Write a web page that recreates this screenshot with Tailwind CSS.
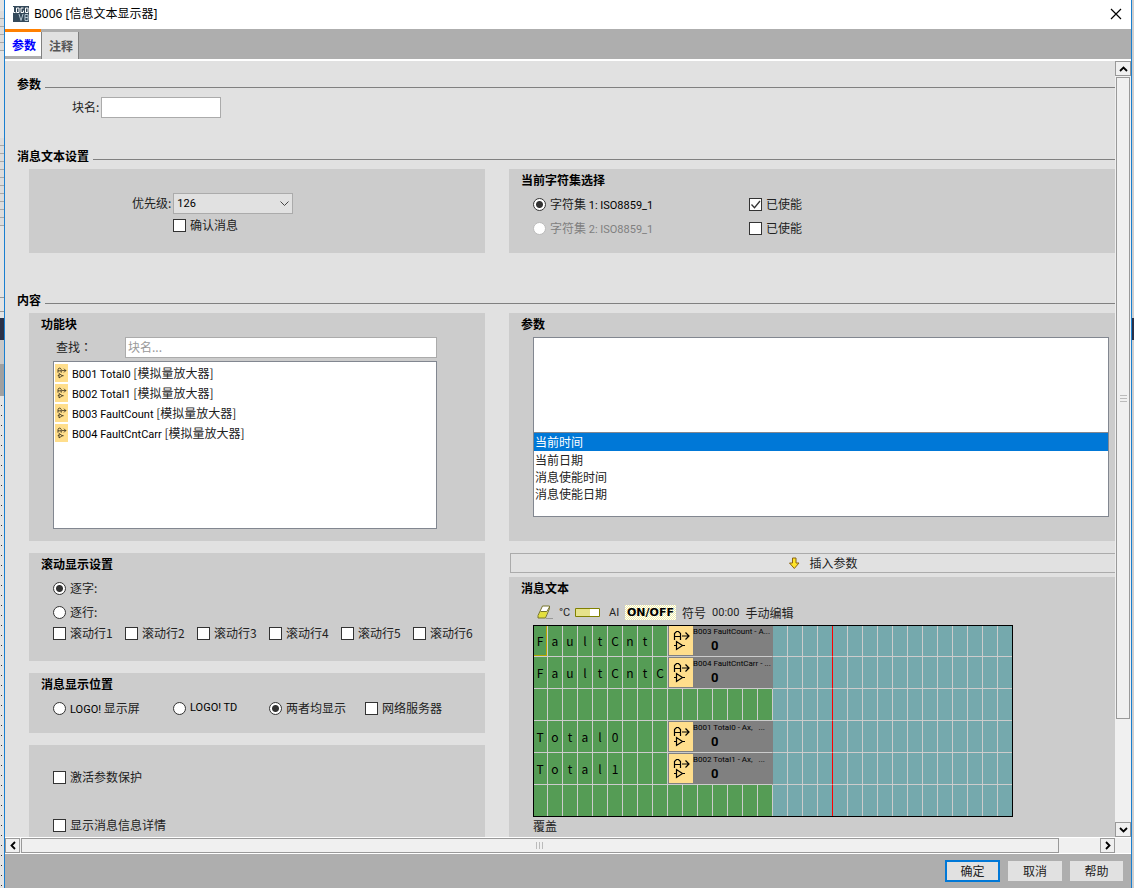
<!DOCTYPE html>
<html lang="zh-CN">
<head>
<meta charset="utf-8">
<title>B006 [信息文本显示器]</title>
<script src="https://cdn.jsdelivr.net/npm/@tailwindcss/browser@4"></script>
</head>
<body class="flex h-screen overflow-hidden bg-[#d8dde3] font-['Noto_Sans_CJK_SC',sans-serif] text-xs leading-6 text-[#222]">

<svg class="hidden">
  <symbol id="tick" viewBox="0 0 13 13"><path d="M2.500 6.500l3 3.200L11 3" fill="none" stroke="#333" stroke-width="1.300"/></symbol>
  <symbol id="amp" viewBox="0 0 24 29"><g fill="none" stroke="#000" stroke-width="1.200"><path d="M5.500 14V7.500L7.500 5.500h2L11.500 7.500V14M5.500 10.500h6M13 10h7M16.500 6.500L20 10l-3.500 3.500M5 19.500h2.500M7.500 15.500v8l6-4zM13 19.500h3"/></g></symbol>
</svg>

<div class="flex w-1 shrink-0 flex-col bg-[#e4e4e4]">
  <div class="h-[11px]"></div>
  <div class="h-10 bg-[repeating-linear-gradient(#dcdcdc_0_7px,#a8a8a8_7px_8px)]"></div>
  <div class="h-[87px]"></div>
  <div class="h-[88px] bg-[repeating-linear-gradient(#dcdcdc_0_7px,#a8a8a8_7px_8px)]"></div>
  <div class="h-[71px]"></div>
  <div class="h-[15px] border-y border-[#999]"></div>
  <div class="h-[6px]"></div>
  <div class="h-[22px] bg-[#2a3147]"></div>
  <div class="h-6 bg-[#c8c8c8]"></div>
  <div class="h-8 bg-[#a0a0a0]"></div>
  <div class="flex-1 bg-[repeating-linear-gradient(#e4e4e4_0_9px,#333_9px_10px)] bg-[length:1px_100%] bg-[position:1px_0] bg-no-repeat"></div>
</div>

<main class="flex min-w-0 flex-1 flex-col border-x border-[#1a7fd0] bg-[#e1e1e1]">
  <header class="flex h-[29px] shrink-0 items-center gap-[5px] bg-white pb-[2px] pl-2 pr-[9px] text-black">
    <svg width="16" height="16" viewBox="0 0 16 16" role="img" aria-label="LOGO V8">
      <rect width="16" height="16" fill="#34495a"/>
      <g fill="none" stroke="#fff"><path d="M.5 1v5.500h2M3.500 2h2.500v4.500h-2.500zM10.500 2H8v4.500h2.500v-2M12.500 2h2.500v4.500h-2.500z"/><path d="M6 8l2 6.500 2-6.500M12 8.500h3v6h-3zM12 11.500h3" stroke="#b4c6d2"/></g>
    </svg>
    <h1 class="flex-1 font-['Noto_Sans','Noto_Sans_CJK_SC',sans-serif]">B006 [信息文本显示器]</h1>
    <button aria-label="关闭"><svg width="12" height="12" viewBox="0 0 12 12"><path d="M1 1l10 10M11 1L1 11" stroke="#000" stroke-width="1.200"/></svg></button>
  </header>

  <nav class="flex h-[30px] shrink-0 bg-[#aeaeae] font-bold" role="tablist">
    <button role="tab" aria-selected="true" class="mb-[3px] w-9 border-t-3 border-[#ff8000] bg-white pl-[2px] pt-[2px] leading-[22px] text-[#0000ff]">参数</button>
    <button role="tab" class="mt-[3px] w-[38px] border-x border-[#808080] bg-[#e1e1e1] pl-[2px] text-[#555]">注释</button>
  </nav>

  <div class="flex min-h-0 flex-1 border-t-2 border-white">
    <div class="flex min-w-0 flex-1 flex-col overflow-hidden pl-3 pt-[11px]">
      <div class="flex shrink-0 items-center gap-1"><h2 class="font-bold text-black">参数</h2><div class="mt-[7px] h-px flex-1 bg-[#808080]"></div></div>
      <div class="flex h-[22px] shrink-0 items-center gap-[2px] pl-[55px]"><label for="name">块名:</label><input id="name" class="h-[21px] w-[120px] border border-[#ababab] bg-white px-1"></div>
      <div class="mt-[26px] flex shrink-0 items-center gap-1"><h2 class="font-bold text-black">消息文本设置</h2><div class="mt-[7px] h-px flex-1 bg-[#808080]"></div></div>

      <div class="mt-px flex shrink-0 gap-6 pl-3">
        <section class="h-[84px] w-[456px] shrink-0 bg-[#ccc] pl-[103px] pt-[22px]">
          <div class="flex items-center gap-[2px]"><label for="prio">优先级:</label>
            <div class="relative"><select id="prio" class="block h-[21px] w-[120px] appearance-none border border-[#ababab] bg-[#e1e1e1] px-[3px] font-['Roboto'] text-[11px] leading-[19px] text-black"><option>126</option></select>
              <svg class="pointer-events-none absolute right-1 top-2" width="9" height="6" viewBox="0 0 9 6"><path d="M.5 .5l4 4 4-4" fill="none" stroke="#444"/></svg></div></div>
          <label class="-mt-[2px] flex items-center gap-1 pl-[41px]"><input type="checkbox" class="size-[13px] appearance-none border border-[#333] bg-white">确认消息</label>
        </section>
        <section class="h-[84px] min-w-0 flex-1 bg-[#ccc] pl-6">
          <h3 class="-ml-3 -mt-px font-bold text-black">当前字符集选择</h3>
          <div class="flex h-6 items-center"><label class="flex w-[216px] items-center gap-1"><input type="radio" name="cs" checked class="size-[13px] appearance-none rounded-full border border-[#333] bg-white checked:bg-[radial-gradient(circle,#333_3px,#fff_4px)]"><span>字符集 <span class="font-['Roboto'] text-[11px] leading-4 text-black">1: ISO8859_1</span></span></label>
            <label class="relative flex items-center gap-1"><input type="checkbox" checked class="peer size-[13px] appearance-none border border-[#333] bg-white">已使能<svg class="pointer-events-none absolute left-0 hidden size-[13px] peer-checked:block"><use href="#tick"/></svg></label></div>
          <div class="flex h-6 items-center"><label class="flex w-[216px] items-center gap-1 text-[#808080]"><input type="radio" name="cs" disabled class="size-[13px] appearance-none rounded-full border border-[#bbb] bg-white"><span>字符集 <span class="font-['Roboto'] text-[11px] leading-4">2: ISO8859_1</span></span></label>
            <label class="flex items-center gap-1"><input type="checkbox" class="size-[13px] appearance-none border border-[#333] bg-white">已使能</label></div>
        </section>
      </div>

      <div class="mt-[35px] flex shrink-0 items-center gap-1"><h2 class="font-bold text-black">内容</h2><div class="mt-[7px] h-px flex-1 bg-[#808080]"></div></div>

      <div class="mt-px flex min-h-0 flex-1 gap-6 pl-3">
        <div class="flex w-[456px] shrink-0 flex-col gap-3">
          <section class="h-[228px] shrink-0 bg-[#ccc] pl-6 pr-12">
            <h3 class="-ml-3 -mt-px font-bold text-black">功能块</h3>
            <div class="flex h-[22px] items-center pl-[3px]"><label for="find" class="w-[69px]">查找<span class="font-['Noto_Sans_CJK_TC']" lang="zh-TW">：</span></label><input id="find" placeholder="块名..." class="h-[21px] min-w-0 flex-1 border border-[#ababab] bg-white px-[2px] placeholder:text-[#999]"></div>
            <ul class="mt-[3px] h-[168px] border border-[#828790] bg-white px-px pt-px leading-5">
              <li class="flex h-5 items-center gap-1"><svg class="h-[18px] w-[13px] bg-[#ffde8c]"><use href="#amp"/></svg><span><span class="font-['Roboto'] text-[11px] leading-4 text-black">B001 Total0</span> [模拟量放大器]</span></li>
              <li class="flex h-5 items-center gap-1"><svg class="h-[18px] w-[13px] bg-[#ffde8c]"><use href="#amp"/></svg><span><span class="font-['Roboto'] text-[11px] leading-4 text-black">B002 Total1</span> [模拟量放大器]</span></li>
              <li class="flex h-5 items-center gap-1"><svg class="h-[18px] w-[13px] bg-[#ffde8c]"><use href="#amp"/></svg><span><span class="font-['Roboto'] text-[11px] leading-4 text-black">B003 FaultCount</span> [模拟量放大器]</span></li>
              <li class="flex h-5 items-center gap-1"><svg class="h-[18px] w-[13px] bg-[#ffde8c]"><use href="#amp"/></svg><span><span class="font-['Roboto'] text-[11px] leading-4 text-black">B004 FaultCntCarr</span> [模拟量放大器]</span></li>
            </ul>
          </section>
          <section class="h-[108px] shrink-0 bg-[#ccc] pl-6">
            <h3 class="-ml-3 -mt-px font-bold text-black">滚动显示设置</h3>
            <label class="flex items-center gap-1"><input type="radio" name="scroll" checked class="size-[13px] appearance-none rounded-full border border-[#333] bg-white checked:bg-[radial-gradient(circle,#333_3px,#fff_4px)]">逐字:</label>
            <label class="flex items-center gap-1"><input type="radio" name="scroll" class="size-[13px] appearance-none rounded-full border border-[#333] bg-white checked:bg-[radial-gradient(circle,#333_3px,#fff_4px)]">逐行:</label>
            <div class="-mt-[3px] grid grid-cols-6">
              <label class="flex items-center gap-1"><input type="checkbox" class="size-[13px] appearance-none border border-[#333] bg-white">滚动行1</label>
              <label class="flex items-center gap-1"><input type="checkbox" class="size-[13px] appearance-none border border-[#333] bg-white">滚动行2</label>
              <label class="flex items-center gap-1"><input type="checkbox" class="size-[13px] appearance-none border border-[#333] bg-white">滚动行3</label>
              <label class="flex items-center gap-1"><input type="checkbox" class="size-[13px] appearance-none border border-[#333] bg-white">滚动行4</label>
              <label class="flex items-center gap-1"><input type="checkbox" class="size-[13px] appearance-none border border-[#333] bg-white">滚动行5</label>
              <label class="flex items-center gap-1"><input type="checkbox" class="size-[13px] appearance-none border border-[#333] bg-white">滚动行6</label>
            </div>
          </section>
          <section class="h-[60px] shrink-0 bg-[#ccc] pl-6">
            <h3 class="-ml-3 -mt-px font-bold text-black">消息显示位置</h3>
            <div class="flex h-6 items-center">
              <label class="flex w-[120px] items-center gap-1"><input type="radio" name="pos" class="size-[13px] appearance-none rounded-full border border-[#333] bg-white checked:bg-[radial-gradient(circle,#333_3px,#fff_4px)]"><span><span class="font-['Roboto'] text-[11px] leading-4 text-black">LOGO!</span> 显示屏</span></label>
              <label class="flex w-24 items-center gap-1"><input type="radio" name="pos" class="size-[13px] appearance-none rounded-full border border-[#333] bg-white checked:bg-[radial-gradient(circle,#333_3px,#fff_4px)]"><span class="font-['Roboto'] text-[11px] text-black">LOGO! TD</span></label>
              <label class="flex w-24 items-center gap-1"><input type="radio" name="pos" checked class="size-[13px] appearance-none rounded-full border border-[#333] bg-white checked:bg-[radial-gradient(circle,#333_3px,#fff_4px)]">两者均显示</label>
              <label class="flex items-center gap-1"><input type="checkbox" class="size-[13px] appearance-none border border-[#333] bg-white">网络服务器</label>
            </div>
          </section>
          <section class="min-h-0 flex-1 bg-[#ccc] pl-6 pt-5">
            <label class="flex items-center gap-1"><input type="checkbox" class="size-[13px] appearance-none border border-[#333] bg-white">激活参数保护</label>
            <label class="mt-6 flex items-center gap-1"><input type="checkbox" class="size-[13px] appearance-none border border-[#333] bg-white">显示消息信息详情</label>
          </section>
        </div>

        <div class="flex min-w-0 flex-1 flex-col">
          <section class="h-[228px] shrink-0 bg-[#ccc] pl-6 pr-1.5">
            <h3 class="-ml-3 -mt-px font-bold text-black">参数</h3>
            <div class="mt-px h-24 border border-[#828790] bg-white"></div>
            <ul class="h-[84px] border border-t-0 border-[#828790] bg-white leading-[17px]">
              <li class="bg-[#0078d7] px-px leading-[18px] text-white">当前时间</li>
              <li class="px-px">当前日期</li>
              <li class="px-px">消息使能时间</li>
              <li class="px-px">消息使能日期</li>
            </ul>
          </section>
          <button class="ml-px mt-3 flex h-5 shrink-0 items-center justify-center gap-2 border border-r-0 border-[#ababab] pl-5">
            <svg width="13" height="13" viewBox="0 0 13 13"><path d="M4.500 1h3.500v5h3L6.300 11.500 1.500 6h3z" fill="#ffe52a" stroke="#8a6212"/></svg>插入参数</button>
          <section class="mt-1 min-h-0 flex-1 bg-[#ccc] pl-6">
            <h3 class="-ml-3 -mt-px font-bold text-black">消息文本</h3>
            <div class="flex h-[25px] items-center pl-1">
              <button aria-label="清除" class="w-[22px]"><svg width="16" height="15" viewBox="0 0 16 15"><path d="M5.500 1h7L9 13H1L.8 10.500z" fill="#fff"/><path d="M3.500 6.500h7L8.500 13H1V10.500z" fill="#e3df3c"/><path d="M5.500 1h7v2.500L8.500 13H1v-2.500zM3.500 6.500h6M9.500 7L12.500 2" fill="none" stroke="#77742a"/><path d="M9 13.500h7" stroke="#999"/></svg></button>
              <button class="w-4 text-left font-['Roboto'] text-[11px]">°C</button>
              <button aria-label="棒图" class="w-[34px]"><svg width="25" height="9" viewBox="0 0 25 9"><path d="M.5 .5h24v8H.5z" fill="#fff" stroke="#808000"/><path d="M1 1h14v7H1z" fill="#e6e28a"/></svg></button>
              <button class="w-4 text-left font-['Roboto'] text-[11px]">AI</button>
              <button class="h-[15px] w-[51px] bg-[repeating-conic-gradient(#ffffff_0_25%,#f0eda8_0_50%)] bg-[length:2px_2px] font-['DejaVu_Sans'] text-[11px] font-bold leading-[15px] text-black">ON/OFF</button>
              <div class="flex gap-1.5 pl-1.5"><button>符号</button><button class="font-['Roboto'] text-[11px]">00:00</button><button>手动编辑</button></div>
            </div>
            <table class="relative w-[480px] table-fixed border-separate border-spacing-0 text-center leading-[30px] text-black after:pointer-events-none after:absolute after:inset-0 after:border after:border-black">
              <tbody id="display"></tbody>
            </table>
            <p class="-mt-[3px]">覆盖</p>
          </section>
        </div>
      </div>
    </div>
    <div class="flex w-4 shrink-0 flex-col bg-[#f0f0f0]" role="scrollbar" aria-label="垂直" aria-controls="display">
      <button aria-label="向上" class="grid h-[15px] place-items-center border border-[#999]"><svg width="9" height="6" viewBox="0 0 9 6"><path d="M1 5l3.500-3.500L8 5" fill="none" stroke="#000" stroke-width="1.800"/></svg></button>
      <div class="mx-px mt-px grid h-[642px] place-items-center border border-[#999]"><svg width="7" height="7"><path d="M0 .5h7M0 3.500h7M0 6.500h7" stroke="#bbb"/></svg></div>
      <button aria-label="向下" class="mt-auto grid h-[15px] place-items-center border border-[#999]"><svg width="9" height="6" viewBox="0 0 9 6"><path d="M1 1l3.500 3.500L8 1" fill="none" stroke="#000" stroke-width="1.800"/></svg></button>
    </div>
  </div>

  <div class="flex h-[17px] shrink-0 border-y border-white bg-[#f0f0f0] pr-4" role="scrollbar" aria-label="水平" aria-controls="display">
    <button aria-label="向左" class="grid w-[15px] place-items-center border border-[#999]"><svg width="6" height="9" viewBox="0 0 6 9"><path d="M5 1L1.500 4.500 5 8" fill="none" stroke="#000" stroke-width="1.800"/></svg></button>
    <div class="ml-px mr-[41px] grid flex-1 place-items-center border border-[#999]"><svg width="8" height="7"><path d="M.5 0v7M3.500 0v7M6.500 0v7" stroke="#bbb"/></svg></div>
    <button aria-label="向右" class="grid w-[15px] place-items-center border border-[#999]"><svg width="6" height="9" viewBox="0 0 6 9"><path d="M1 1l3.500 3.500L1 8" fill="none" stroke="#000" stroke-width="1.800"/></svg></button>
  </div>

  <footer class="flex h-[34px] shrink-0 items-center justify-end gap-2 bg-[#aeaeae] pr-2">
    <button class="h-[22px] w-[55px] border-2 border-[#0078d7] bg-[#e1e1e1] leading-[18px]">确定</button>
    <button class="h-5 w-[54px] bg-[#e1e1e1] leading-5">取消</button>
    <button class="h-5 w-[53px] bg-[#e1e1e1] leading-5">帮助</button>
  </footer>
</main>
<div class="w-[2px] shrink-0 bg-[#cfcfcf] pt-[318px]"><div class="h-[22px] bg-[#2a3147]"></div></div>

<script>
const rows = [
  ["FaultCnt", "B003 FaultCount - A...", "0"],
  ["FaultCntC", "B004 FaultCntCarr - ...", "0"],
  [""],
  ["Total0", "B001 Total0 - Ax,\u00a0\u00a0 ...", "0"],
  ["Total1", "B002 Total1 - Ax,\u00a0\u00a0 ...", "0"],
  [""]
];
document.getElementById("display").innerHTML = rows.map(([text, name, value], r) => {
  let html = "";
  for (let c = 0; c < 32; c++) {
    if (name && c === 9) {
      html += `<td colspan="7" class="h-8 border-r border-b border-[#ccc] border-r-[#808080] bg-[#808080] p-0"><div class="flex h-[31px] items-center pl-px"><svg class="h-[29px] w-6 shrink-0 bg-[#ffde8c]"><use href="#amp"/></svg><div class="h-full min-w-0 flex-1 whitespace-nowrap text-left font-['Roboto']"><div class="text-[8px] leading-[13px]">${name}</div><div class="pl-[18px] text-[13px] font-bold leading-4">${value}</div></div></div></td>`;
      c = 15;
      continue;
    }
    const cursor = r === 0 && c === 0 ? " shadow-[inset_-1px_-1px_0_#b5a800]" : "";
    const fill = c < 16 ? " bg-[#559c55]" : " bg-[#75a9ad]";
    const edge = c === 19 ? " border-r-[#ff0000]" : "";
    html += `<td class="h-8 border-r border-b border-[#ccc] p-0${fill}${edge}${cursor}">${text[c] || ""}</td>`;
  }
  return `<tr>${html}</tr>`;
}).join("");
</script>
</body>
</html>
